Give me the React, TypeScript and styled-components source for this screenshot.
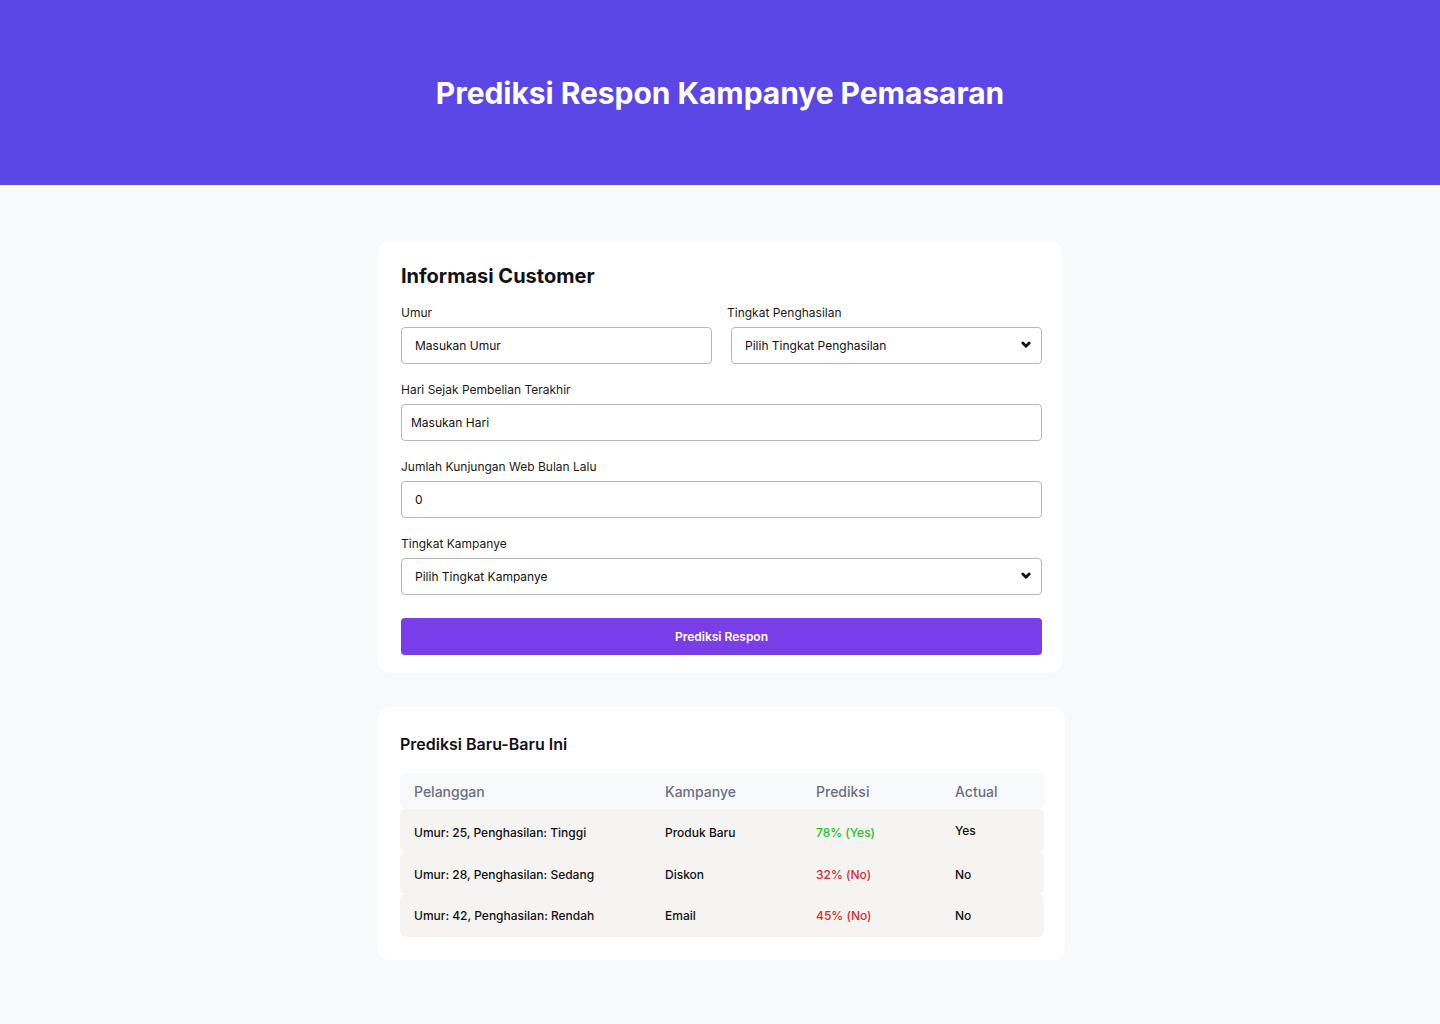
import React from 'react';
import styled, { createGlobalStyle } from 'styled-components';

const GlobalStyle = createGlobalStyle`
  * { box-sizing: border-box; }
  body {
    margin: 0;
    background: #f8f9fb;
    font-family: 'Inter', 'Liberation Sans', sans-serif;
    color: #111;
  }
`;

const ROWS = [
  { customer: 'Umur: 25, Penghasilan: Tinggi', campaign: 'Produk Baru', prediction: '78% (Yes)', positive: true, actual: 'Yes', offset: 5 },
  { customer: 'Umur: 28, Penghasilan: Sedang', campaign: 'Diskon', prediction: '32% (No)', positive: false, actual: 'No', offset: 4 },
  { customer: 'Umur: 42, Penghasilan: Rendah', campaign: 'Email', prediction: '45% (No)', positive: false, actual: 'No', offset: 0 },
];

const Page = styled.div`
  min-height: 1024px;
`;

const Header = styled.header`
  height: 185px;
  background: #5b46e6;
  display: flex;
  justify-content: center;
  padding-top: 74px;
`;

const HeaderTitle = styled.h1`
  margin: 0;
  color: #fff;
  font-size: 30px;
  font-weight: 700;
  line-height: 38px;
  letter-spacing: -0.05px;
`;

const Main = styled.main`
  width: 684px;
  margin: 0 auto;
  display: flex;
  flex-direction: column;
  align-items: flex-start;
  padding-top: 56px;
  gap: 34px;
`;

/* form card and table card have slightly different paddings in the design */
const Card = styled.section<{ $width: number; $padding: string }>`
  width: ${(p) => p.$width}px;
  flex-shrink: 0;
  background: #fff;
  border-radius: 12px;
  padding: ${(p) => p.$padding};
`;

const CardTitle = styled.h2`
  margin: 0 0 14px;
  font-size: 20px;
  font-weight: 700;
  line-height: 30px;
  color: #111;
`;

const Row = styled.div`
  display: grid;
  grid-template-columns: 311px 311px;
  justify-content: space-between;
  margin-bottom: 18px;
`;

const Field = styled.div`
  display: flex;
  flex-direction: column;
  margin-bottom: 18px;
  ${Row} > & {
    margin-bottom: 0;
  }
`;

const Label = styled.label<{ $shift?: number }>`
  font-size: 12px;
  line-height: 16px;
  color: #1a1a1a;
  margin: 0 0 6px ${(p) => p.$shift ?? 0}px;
`;

const Input = styled.input<{ $pad?: number }>`
  height: 37px;
  width: 100%;
  border: 1px solid #b8b8b8;
  border-radius: 4px;
  padding: 0 ${(p) => p.$pad ?? 13}px;
  font-family: inherit;
  font-size: 12px;
  color: #111;
  background: #fff;
  &::placeholder {
    color: #111;
  }
`;

const SelectWrap = styled.div`
  position: relative;
`;

const Select = styled.select`
  appearance: none;
  height: 37px;
  width: 100%;
  border: 1px solid #b8b8b8;
  border-radius: 4px;
  padding: 0 13px;
  font-family: inherit;
  font-size: 12px;
  color: #111;
  background: #fff;
`;

const Chevron = styled.svg`
  position: absolute;
  right: 11px;
  top: 14px;
  pointer-events: none;
`;

const SubmitButton = styled.button`
  margin-top: 5px;
  width: 100%;
  height: 37px;
  border: none;
  border-radius: 4px;
  background: #7a3dea;
  color: #fff;
  font-family: inherit;
  font-size: 12px;
  font-weight: 600;
`;

const TableTitle = styled.h3`
  margin: 5px 0 17px;
  font-size: 16px;
  font-weight: 600;
  line-height: 24px;
  color: #111;
`;

const Table = styled.div`
  display: flex;
  flex-direction: column;
`;

const TableRow = styled.div<{ $head?: boolean; $offset?: number }>`
  display: grid;
  grid-template-columns: 251px 151px 139px 1fr;
  align-items: center;
  padding: ${(p) => p.$offset ?? 0}px 0 0 14px;
  height: ${(p) => (p.$head ? '36px' : '42.67px')};
  border-radius: 6px;
  background: ${(p) => (p.$head ? '#f8f9fb' : '#f5f4f2')};
`;

const HeadCell = styled.div`
  font-size: 14px;
  font-weight: 500;
  color: #6b7080;
`;

const Cell = styled.div<{ $tone?: 'pos' | 'neg'; $lift?: number }>`
  font-size: 12px;
  font-weight: 500;
  color: ${(p) => (p.$tone === 'pos' ? '#22c322' : p.$tone === 'neg' ? '#e0282e' : '#111')};
  transform: translateY(${(p) => p.$lift ?? 0}px);
`;

const ChevronIcon = () => (
  <Chevron width="10" height="8" viewBox="0 0 10 8">
    <path d="M1.8 2 L5 5.3 L8.2 2" fill="none" stroke="#111" strokeWidth="2.8" strokeLinecap="round" strokeLinejoin="round" />
  </Chevron>
);

export default function App() {
  return (
    <Page>
      <GlobalStyle />
      <Header>
        <HeaderTitle>Prediksi Respon Kampanye Pemasaran</HeaderTitle>
      </Header>
      <Main>
        <Card $width={684} $padding="20px 20px 18px 23px">
          <CardTitle>Informasi Customer</CardTitle>
          <Row>
            <Field>
              <Label>Umur</Label>
              <Input placeholder="Masukan Umur" />
            </Field>
            <Field>
              <Label $shift={-4}>Tingkat Penghasilan</Label>
              <SelectWrap>
                <Select defaultValue="">
                  <option value="">Pilih Tingkat Penghasilan</option>
                </Select>
                <ChevronIcon />
              </SelectWrap>
            </Field>
          </Row>
          <Field>
            <Label>Hari Sejak Pembelian Terakhir</Label>
            <Input $pad={9} placeholder="Masukan Hari" />
          </Field>
          <Field>
            <Label>Jumlah Kunjungan Web Bulan Lalu</Label>
            <Input defaultValue="0" />
          </Field>
          <Field>
            <Label>Tingkat Kampanye</Label>
            <SelectWrap>
              <Select defaultValue="">
                <option value="">Pilih Tingkat Kampanye</option>
              </Select>
              <ChevronIcon />
            </SelectWrap>
          </Field>
          <SubmitButton>Prediksi Respon</SubmitButton>
        </Card>

        <Card $width={687} $padding="20px 21px 23px 22px">
          <TableTitle>Prediksi Baru-Baru Ini</TableTitle>
          <Table>
            <TableRow $head>
              <HeadCell>Pelanggan</HeadCell>
              <HeadCell>Kampanye</HeadCell>
              <HeadCell>Prediksi</HeadCell>
              <HeadCell>Actual</HeadCell>
            </TableRow>
            {ROWS.map((r, i) => (
              <TableRow key={i} $offset={r.offset}>
                <Cell>{r.customer}</Cell>
                <Cell>{r.campaign}</Cell>
                <Cell $tone={r.positive ? 'pos' : 'neg'}>{r.prediction}</Cell>
                <Cell $lift={i === 0 ? -2 : 0}>{r.actual}</Cell>
              </TableRow>
            ))}
          </Table>
        </Card>
      </Main>
    </Page>
  );
}
